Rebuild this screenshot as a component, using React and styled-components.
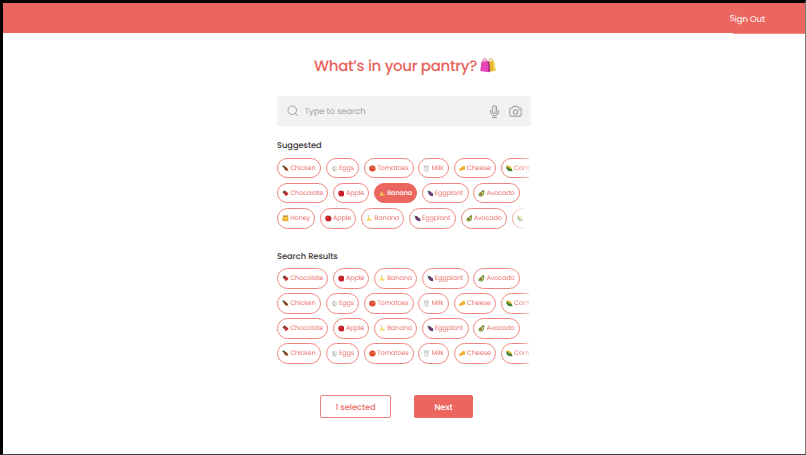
import React from 'react';
import styled, { createGlobalStyle } from 'styled-components';

const foods = {
  chicken: { label: 'Chicken', width: 44.2, text: 25.3 },
  eggs: { label: 'Eggs', width: 33.4, text: 15 },
  tomatoes: { label: 'Tomatoes', width: 49.8, text: 31.4 },
  milk: { label: 'Milk', width: 30.5, text: 11.8 },
  cheese: { label: 'Cheese', width: 42.5, text: 24.2 },
  corn: { label: 'Corn', width: 36, text: 15.5 },
  chocolate: { label: 'Chocolate', width: 51, text: 33 },
  apple: { label: 'Apple', width: 36.6, text: 18.2 },
  banana: { label: 'Banana', width: 43, text: 25 },
  eggplant: { label: 'Eggplant', width: 47, text: 28.2 },
  avocado: { label: 'Avocado', width: 46.6, text: 28 },
  honey: { label: 'Honey', width: 38.2, text: 20 },
};

const basics = ['chicken', 'eggs', 'tomatoes', 'milk', 'cheese', 'corn'];
const produce = ['chocolate', 'apple', 'banana', 'eggplant', 'avocado'];
const breakfast = ['honey', 'apple', 'banana', 'eggplant', 'avocado', 'corn'];

const drawings = {
  chicken: (
    <>
      <path d='M.5 1.2L4 .8l1.4 2.5-2 1.4-2.6-1.5z' fill='#2f6b3c' />
      <path d='M3 3c3-1 7 2 8 6 0 2-2 2-3 1C5 9 3 6 3 3z' fill='#8c3c1e' />
      <path d='M9 9l2.3 2.3' stroke='#e9b98a' strokeWidth='1.6' />
    </>
  ),
  eggs: (
    <>
      <ellipse cx='6.4' cy='6.3' rx='4' ry='5' fill='#bfbfbd' />
      <ellipse cx='7.4' cy='5.6' rx='2.8' ry='4' fill='#e6e6e4' />
    </>
  ),
  tomatoes: (
    <>
      <ellipse cx='6' cy='6.2' rx='5.6' ry='5.3' fill='#e2462b' />
      <ellipse cx='7' cy='5.2' rx='3' ry='2' fill='#ed6a46' />
      <path d='M3 2.6L5 2l1-1 1 1 2 .2-2 1-1.5.6z' fill='#a3613b' />
    </>
  ),
  milk: (
    <>
      <path d='M2.2 1.2h7.6l-1 10H3.4z' fill='#dde1e4' stroke='#bbc3c8' strokeWidth='.8' />
      <path d='M2.4 3.2h7' stroke='#b3bdc4' />
      <path d='M4.4 5l.5 5' stroke='#fff' />
    </>
  ),
  cheese: (
    <>
      <path d='M.4 7.3L7.4 1.2c2.8.3 4 2 4.2 4.4L10.8 8 .7 10.8z' fill='#f4b52c' />
      <path d='M.6 7.5l10.8-1.7' stroke='#dd951e' strokeWidth='.8' />
      <circle cx='4' cy='8.6' r='.9' fill='#dd951e' />
    </>
  ),
  corn: (
    <>
      <path d='M1 1C7-.2 10.5 4 10.8 10 6 10.5 1 6 1 1z' fill='#e0bd2b' />
      <path d='M.5 2c3 1 6.5 4 8 9.2C3 11.6 0 7 .5 2zM7.5 6c2 0 3.4 1.2 4 4.8L7 11z' fill='#397d36' />
    </>
  ),
  chocolate: (
    <>
      <path d='M.8 3.7l4.2-3.3 3 4-4 3z' fill='#68382d' />
      <path d='M3.3 5.4L8 2.8l3.6 4.4L6.5 11z' fill='#c5302f' />
      <path d='M3 2l3 4M5 1.6L2.2 4' stroke='#9b6453' strokeWidth='.5' />
    </>
  ),
  apple: (
    <>
      <path d='M6 1.9C1.5 0 0 4 .7 7.6c1 3.6 3.4 4.4 5.3 3.6 2 .8 4.3 0 5.3-3.6C12.2 4 9.7.4 6 1.9z' fill='#c91e29' />
      <path d='M6 3.3C6 2 5.6 1.2 5 .5' stroke='#653928' fill='none' />
      <path d='M6.4 2c.7-1.2 1.5-1.4 2.6-1.2-.4 1.2-1.3 1.6-2.6 1.2z' fill='#548a3c' />
      <path d='M3 4.4c1-.6 1.6-.4 2 .2' stroke='#ef8d85' fill='none' />
    </>
  ),
  banana: (
    <>
      <path d='M4.6 1.6c0 4 1.6 6 6.8 6.8-2 3.4-7.4 2-8-2.6z' fill='#f0cc3e' />
      <path d='M4 2C3 5.8 2.8 8.3.6 9.4 4 12 6.7 8 5.5 4.3z' fill='#f6da5c' />
      <path d='M4.2.6l.4 2' stroke='#897331' strokeWidth='1.2' />
    </>
  ),
  eggplant: (
    <>
      <path d='M2 3c2-2 4-1 5.3 1C9 4.6 12 6.6 11.6 9.3 10.4 12 6.3 11 4.6 8.8 3.2 7.5 1.2 5.3 2 3z' fill='#63386f' />
      <path d='M.3.6l2.2 1.1 2.3.4-1 1.4L2 5z' fill='#557244' />
      <path d='M5 4.4l4 3.4' stroke='#8c6794' strokeWidth='.8' />
    </>
  ),
  avocado: (
    <>
      <path d='M.8 8.3C.8 5 5 4.5 6.6 2 8-.2 11.4.3 11.2 3.5c-.2 3.5-2 8.2-6.5 8C2.4 11.4.7 10 .8 8.3z' fill='#5d7c2f' />
      <path d='M2.3 8.3c.4-2 4-2.4 5.1-4.5 1-1.9 2.6-1.6 2.4.3-.3 3-2 6.2-5 6.1-1.5 0-2.6-.8-2.5-1.9z' fill='#dcdd72' />
      <circle cx='5.2' cy='7.5' r='1.7' fill='#805127' />
    </>
  ),
  honey: (
    <>
      <path d='M2 2.8h8c2.4 2 2 6.4 0 8.4H2C0 9.2-.4 4.8 2 2.8z' fill='#eaae32' />
      <path d='M1.6.8h8.8v2.4H1.6z' fill='#c5812a' />
      <path d='M2 4h8v2l-2.2.5-1.2 2-1.2-2L2 6.1z' fill='#f9d75a' />
    </>
  ),
};

function FoodIcon({ name }) {
  return <Emoji viewBox='0 0 12 12'>{drawings[name]}</Emoji>;
}

// Keeps a label at its set width whatever face is available
function Label({ width, children, ...rest }) {
  const ref = React.useRef(null);
  const [spacing, setSpacing] = React.useState(0);
  React.useLayoutEffect(() => {
    const natural = ref.current.getBoundingClientRect().width;
    setSpacing((width - natural) / children.length);
  }, [width, children]);
  return (
    <LabelText ref={ref} style={{ letterSpacing: `${spacing}px` }} {...rest}>
      {children}
    </LabelText>
  );
}

function FoodRow({ items, selected, fadeFrom }) {
  return (
    <Row $fadeFrom={fadeFrom}>
      {items.map((item) => (
        <Chip key={item} $width={foods[item].width} $selected={item === selected}>
          <FoodIcon name={item} />
          <Label width={foods[item].text}>{foods[item].label}</Label>
        </Chip>
      ))}
    </Row>
  );
}

function ShoppingBags() {
  return (
    <BagIcon viewBox='0 0 16 16'>
      <path d='M8 5l6-1.5 1.6 10L9 15z' fill='#e6b52f' />
      <path d='M9.2 5.5C8.6 1 11.6-.3 12.7 4.6' fill='none' stroke='#bc9730' strokeWidth='.8' />
      <path d='M12.5 4.2l1.5-.7 1.6 10-1.8.4z' fill='#f5d65b' />
      <path d='M1.4 4.7L7.7 4l1.4 11.2L.3 14z' fill='#e943b8' />
      <path d='M7.7 4l1.6 1 .9 9.5-1.8.8z' fill='#a52c8d' />
      <path d='M3 6C2.4.5 5.9-.7 6.8 5.3' fill='none' stroke='#c7468d' strokeWidth='.8' />
      <path d='M4.2 5.5c.2-4.8 3-4.4 3.8-.7' fill='none' stroke='#ef8ac0' strokeWidth='.6' />
    </BagIcon>
  );
}

function App() {
  return (
    <Page>
      <GlobalStyle />
      <Navbar>
        <SignOut>
          <Initial>S</Initial>
          <Label width={30.2}>ign Out</Label>
        </SignOut>
        <NavEdge />
      </Navbar>
      <Main>
        <Title>
          <Label width={163}>What’s in your pantry?</Label>
          <ShoppingBags />
        </Title>
        <SearchBar>
          <LineIcon $size={11.5} viewBox='0 0 24 24'>
            <circle cx='11' cy='11' r='9' />
            <path d='M17.5 17.5l5 5' />
          </LineIcon>
          <Placeholder>
            <Label width={61}>Type to search</Label>
          </Placeholder>
          <LineIcon $size={13} viewBox='0 0 24 24'>
            <rect x='8' y='1.5' width='8' height='14' rx='4' />
            <path d='M4.5 10v2a7.5 7.5 0 0 0 15 0v-2M12 19.5V23M8 23h8' />
            <path d='M12.5 5.5H16M12.5 8.5H16M12.5 11.5H16' strokeWidth='1.2' />
          </LineIcon>
          <LineIcon $size={13} viewBox='0 0 24 24'>
            <path d='M1.5 7.5a2 2 0 0 1 2-2H6L8.3 2.5h7.4L18 5.5h2.5a2 2 0 0 1 2 2v11a2 2 0 0 1-2 2h-17a2 2 0 0 1-2-2z' />
            <circle cx='12' cy='12.7' r='4' />
            <path d='M18.5 9h.5' />
          </LineIcon>
        </SearchBar>
        <Section $top={13.4}>
          <SectionTitle>
            <Label width={44.7}>Suggested</Label>
          </SectionTitle>
          <FoodRow items={basics} fadeFrom={242} />
          <FoodRow items={produce} selected='banana' />
          <FoodRow items={breakfast} fadeFrom={230} />
        </Section>
        <Section $top={21}>
          <SectionTitle>
            <Label width={60.7}>Search Results</Label>
          </SectionTitle>
          <FoodRow items={produce} />
          <FoodRow items={basics} fadeFrom={242} />
          <FoodRow items={produce} />
          <FoodRow items={basics} fadeFrom={242} />
        </Section>
        <Actions>
          <Button $width={71}>
            <Label width={40.2}>1 selected</Label>
          </Button>
          <Button $width={59} $primary>
            <Label width={18.2}>Next</Label>
          </Button>
        </Actions>
      </Main>
    </Page>
  );
}

const GlobalStyle = createGlobalStyle`
  * {
    box-sizing: border-box;
  }

  body {
    margin: 0;
    background-color: #fff;
    font-family: Poppins, Inter, 'Open Sans', sans-serif;
    font-feature-settings: 'cv11' 1;
    text-rendering: geometricPrecision;
  }
`;

const Page = styled.div`
  height: 455px;
  border: solid #000;
  border-width: 3px 1px 1px 3px;
  border-right-color: #777;
  border-bottom-color: #444;
  overflow: hidden;
`;

const Navbar = styled.header`
  position: relative;
  display: flex;
  align-items: center;
  justify-content: flex-end;
  height: 30px;
  padding-right: 40px;
  background-color: #eb665f;
`;

const NavEdge = styled.div`
  position: absolute;
  right: 0;
  bottom: -1px;
  width: 72px;
  height: 1px;
  background-color: #f08d87;
`;

const SignOut = styled.button`
  display: flex;
  padding: 2px 0 0;
  border: 0;
  background: transparent;
  color: #fff;
  font: inherit;
  font-size: 8.5px;
  line-height: 12px;
  text-rendering: inherit;
`;

const Initial = styled.span`
  width: 5px;
  transform: translateY(-1px);
`;

const LabelText = styled.span`
  white-space: nowrap;
`;

const Main = styled.main`
  width: 254px;
  margin-left: 274px;
`;

const Title = styled.h1`
  display: flex;
  align-items: center;
  height: 20px;
  margin: 23px 0 20px;
  padding: 1px 0 0 37px;
  color: #e8635d;
  font-size: 15px;
  font-weight: 500;
  line-height: 20px;
`;

const BagIcon = styled.svg`
  width: 16px;
  height: 16px;
  margin: -3px 0 0 3px;
`;

const SearchBar = styled.div`
  display: flex;
  align-items: center;
  height: 30px;
  padding: 0 9px 0 10px;
  border-radius: 1px;
  background-color: #f2f2f2;
`;

const LineIcon = styled.svg`
  width: ${(props) => props.$size}px;
  height: ${(props) => props.$size}px;
  fill: none;
  stroke: #a0a0a0;
  stroke-width: 2;
  stroke-linecap: round;
  stroke-linejoin: round;

  & + & {
    margin-left: 8px;
  }
`;

const Placeholder = styled.div`
  flex: 1;
  padding-left: 6px;
  color: #a0a0a0;
  font-size: 8.4px;
`;

const Section = styled.section`
  display: flex;
  flex-direction: column;
  gap: 4.6px;
  margin-top: ${(props) => props.$top}px;
`;

const SectionTitle = styled.h2`
  height: 13px;
  margin: 0 0 0.9px;
  color: #3b3638;
  font-size: 8.3px;
  font-weight: 500;
  line-height: 12px;
`;

const Row = styled.div`
  display: flex;
  gap: 4.7px;
  width: 252px;
  height: 20.5px;
  overflow: hidden;
  ${(props) =>
    props.$fadeFrom &&
    `mask-image: linear-gradient(to right, #000 ${props.$fadeFrom}px, transparent ${
      props.$fadeFrom + 20
    }px);`}
`;

const Chip = styled.button`
  display: flex;
  flex: none;
  align-items: center;
  width: ${(props) => props.$width}px;
  height: 20.5px;
  padding: 1.8px 0 0 4px;
  border: 1px solid ${(props) => (props.$selected ? '#eb665f' : '#ef8681')};
  border-radius: 10.5px;
  background-color: ${(props) => (props.$selected ? '#eb665f' : '#fff')};
  color: ${(props) => (props.$selected ? '#fff' : '#ec746f')};
  font: inherit;
  font-size: 6.5px;
  font-weight: ${(props) => (props.$selected ? 500 : 400)};
  line-height: 10px;
  text-rendering: inherit;
`;

const Emoji = styled.svg`
  flex: none;
  width: 6.8px;
  height: 6.8px;
  margin: -1.6px 1.4px 0 0;
`;

const Actions = styled.div`
  display: flex;
  gap: 23px;
  margin: 31px 0 0 43px;
`;

const Button = styled.button`
  width: ${(props) => props.$width}px;
  height: 23px;
  padding: 1.6px 0 0;
  border: 1px solid ${(props) => (props.$primary ? '#eb665f' : '#ee817c')};
  border-radius: 2px;
  background-color: ${(props) => (props.$primary ? '#eb665f' : '#fff')};
  color: ${(props) => (props.$primary ? '#fff' : '#ea706b')};
  font: inherit;
  font-size: 8.3px;
  font-weight: 500;
  text-rendering: inherit;
`;

export default App;
